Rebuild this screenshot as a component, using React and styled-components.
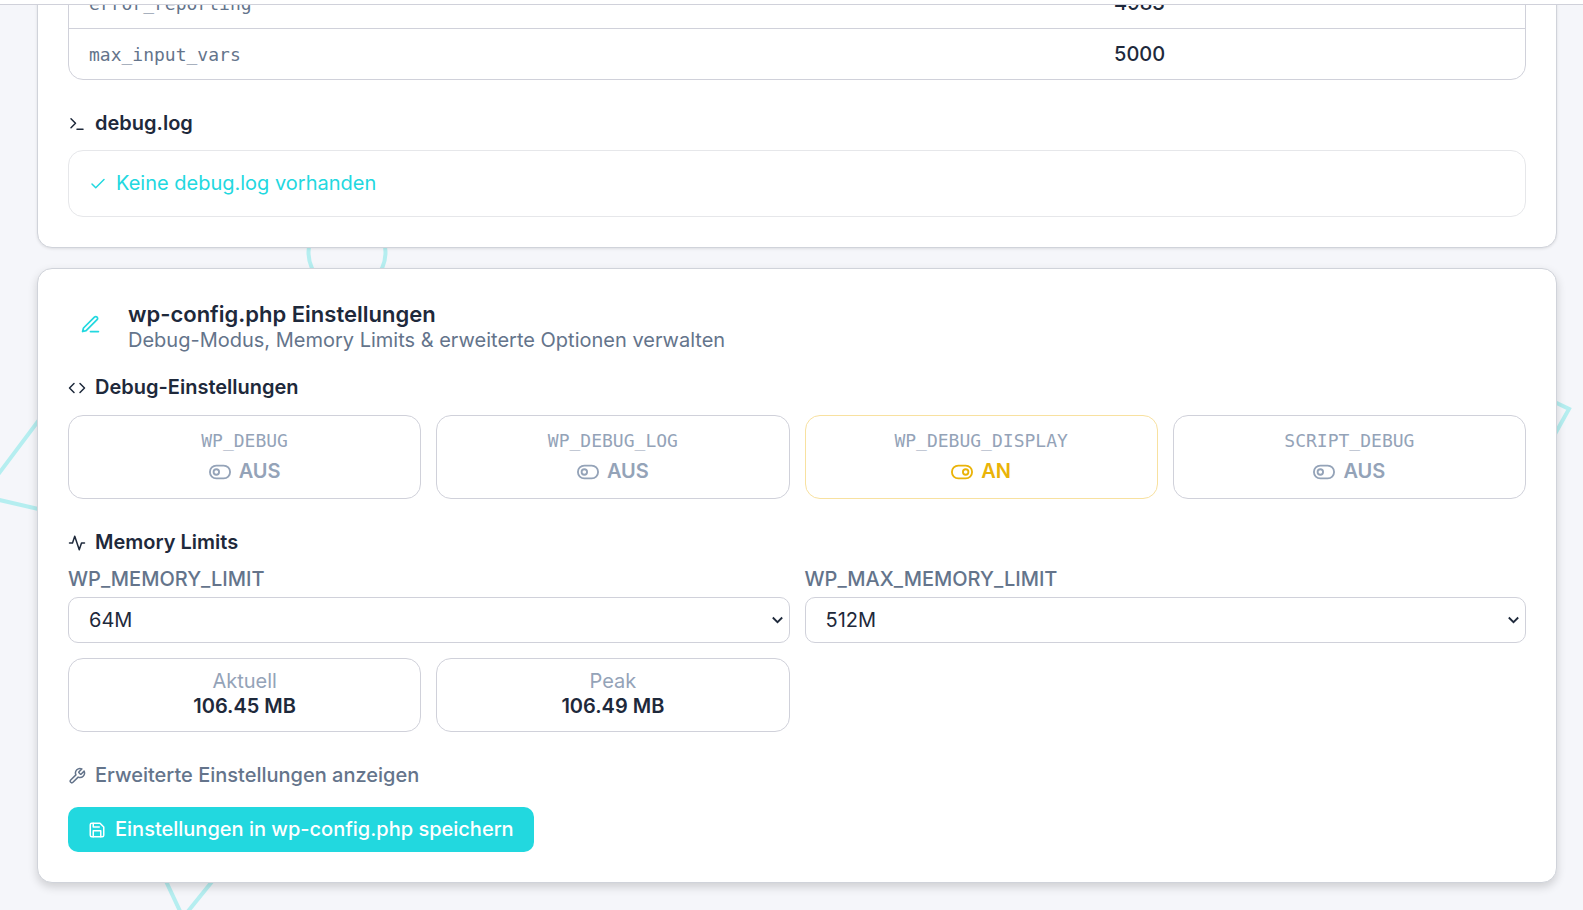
import React, { useState } from 'react';
import styled, { createGlobalStyle } from 'styled-components';
import {
  FiActivity,
  FiCheck,
  FiCode,
  FiEdit3,
  FiSave,
  FiTerminal,
  FiToggleLeft,
  FiToggleRight,
  FiTool,
} from 'react-icons/fi';

const colors = {
  text: '#1e293b',
  muted: '#64748b',
  faint: '#94a3b8',
  border: '#d0d1da',
  accent: '#22d8df',
  warning: '#eab308',
};

const GlobalStyle = createGlobalStyle`
  * {
    box-sizing: border-box;
  }
  body {
    margin: 0;
    background: #f5f6fa;
    color: ${colors.text};
    font: 400 20px/25px Inter, sans-serif;
  }
  button, select {
    font: inherit;
    color: inherit;
  }
`;

const Page = styled.div`
  position: relative;
  min-height: 100vh;
  overflow: hidden;
`;

const TopBar = styled.header`
  position: absolute;
  top: 0;
  left: 0;
  right: 0;
  z-index: 2;
  height: 5px;
  background: #fff;
  border-bottom: 1px solid ${colors.border};
`;

const Backdrop = styled.svg`
  position: absolute;
  top: 0;
  left: 0;
  fill: none;
  stroke: #b5eef0;
  stroke-width: 4;
`;

// the page is scrolled down, the first table row sits under the top bar
const Content = styled.main`
  position: relative;
  display: flex;
  flex-direction: column;
  gap: 20px;
  padding: 0 26px 27px 37px;
  margin-top: -55px;
`;

const Card = styled.section`
  padding: 30px;
  background: #fff;
  border: 1px solid #d0d3da;
  border-radius: 15px;
  box-shadow: ${({ $raised }) => ($raised
    ? '0 4px 10px rgba(0, 0, 0, .16)'
    : '0 1px 3px rgba(0, 0, 0, .1)')};
`;

const TableFrame = styled.div`
  border: 1px solid ${colors.border};
  border-radius: 15px;
  overflow: hidden;
`;

const Table = styled.table`
  width: 100%;
  border-collapse: collapse;
  table-layout: fixed;
  th, td {
    height: 51px;
    padding: 2px 20px 0;
    text-align: left;
  }
  tr + tr > * {
    border-top: 1px solid ${colors.border};
  }
  th {
    width: 70.4%;
    color: ${colors.muted};
    font: 400 18px/25px 'DejaVu Sans Mono', monospace;
  }
  td {
    font-weight: 500;
  }
`;

const SectionTitle = styled.h3`
  display: flex;
  align-items: center;
  gap: 9px;
  margin: ${({ $top = 31 }) => $top}px 0 ${({ $bottom = 14 }) => $bottom}px;
  font-size: 20px;
  font-weight: 600;
`;

const LogStatus = styled.div`
  display: flex;
  align-items: center;
  gap: 9px;
  padding: 20px;
  color: ${colors.accent};
  border: 1px solid #e6e7ea;
  border-radius: 15px;
`;

const CardHeader = styled.div`
  display: flex;
  align-items: flex-start;
  gap: 15px;
`;

const HeaderIcon = styled.span`
  display: flex;
  align-items: center;
  justify-content: center;
  width: 45px;
  height: 50px;
  color: ${colors.accent};
`;

const HeaderText = styled.div`
  padding-top: 2px;
`;

const Title = styled.h2`
  margin: 0;
  font-size: 22px;
  line-height: 27px;
  font-weight: 600;
`;

const Subtitle = styled.p`
  margin: 0;
  color: ${colors.muted};
`;

const Grid = styled.div`
  display: grid;
  grid-template-columns: repeat(${({ $columns }) => $columns}, 1fr);
  gap: 15px;
`;

const Toggle = styled.button`
  display: flex;
  flex-direction: column;
  align-items: center;
  gap: 6px;
  padding: 12px 15px 14px;
  background: #fff;
  border: 1px solid ${({ $on }) => ($on ? '#f8e1a0' : colors.border)};
  border-radius: 15px;
  cursor: pointer;
`;

const ToggleName = styled.span`
  color: ${colors.faint};
  font: 400 18px/25px 'DejaVu Sans Mono', monospace;
`;

const ToggleState = styled.span`
  display: flex;
  align-items: center;
  gap: 8px;
  color: ${({ $on }) => ($on ? colors.warning : colors.faint)};
  font-weight: 600;
`;

const Field = styled.label`
  display: flex;
  flex-direction: column;
  gap: 5px;
  color: ${colors.muted};
  font-weight: 500;
`;

const Select = styled.select`
  appearance: none;
  height: 46px;
  padding: 0 20px;
  color: ${colors.text};
  font-weight: 400;
  border: 1px solid ${colors.border};
  border-radius: 10px;
  background: #fff url("data:image/svg+xml,%3Csvg xmlns='http://www.w3.org/2000/svg' width='11' height='8' fill='none' stroke='%231e293b' stroke-width='1.8'%3E%3Cpath d='M.8 1.5l4.7 4.7 4.7-4.7'/%3E%3C/svg%3E") no-repeat right 6px center;
`;

const Stats = styled(Grid)`
  margin-top: 15px;
`;

const Stat = styled.div`
  padding: 10px 10px 12px;
  text-align: center;
  color: ${colors.faint};
  border: 1px solid ${colors.border};
  border-radius: 15px;
  strong {
    display: block;
    color: ${colors.text};
    font-weight: 600;
  }
`;

const Actions = styled.div`
  display: flex;
  flex-direction: column;
  align-items: flex-start;
  gap: 19px;
  margin-top: 31px;
`;

const LinkButton = styled.button`
  display: flex;
  align-items: center;
  gap: 9px;
  padding: 0;
  color: ${colors.muted};
  font-weight: 500;
  background: none;
  border: 0;
  cursor: pointer;
`;

const SaveButton = styled(LinkButton)`
  padding: 10px 20px;
  color: #fff;
  background: ${colors.accent};
  border-radius: 10px;
`;

const phpValues = [
  ['error_reporting', '4983'],
  ['max_input_vars', '5000'],
];

const limits = ['64M', '128M', '256M', '512M'];

export default function App() {
  const [flags, setFlags] = useState({
    WP_DEBUG: false,
    WP_DEBUG_LOG: false,
    WP_DEBUG_DISPLAY: true,
    SCRIPT_DEBUG: false,
  });

  return (
    <Page>
      <GlobalStyle />
      <TopBar />
      <Backdrop width="1583" height="910" aria-hidden="true">
        <circle cx="347" cy="252" r="38.5" />
        <path d="M60 392L-18 496L60 514" />
        <path d="M1540 395L1569 409L1545 452" />
        <path d="M150 847L183 917.5L223 868" />
      </Backdrop>
      <Content>
        <Card>
          <TableFrame>
            <Table>
              <tbody>
                {phpValues.map(([name, value]) => (
                  <tr key={name}>
                    <th scope="row">{name}</th>
                    <td>{value}</td>
                  </tr>
                ))}
              </tbody>
            </Table>
          </TableFrame>
          <SectionTitle>
            <FiTerminal size={18} />
            debug.log
          </SectionTitle>
          <LogStatus>
            <FiCheck size={18} />
            Keine debug.log vorhanden
          </LogStatus>
        </Card>

        <Card $raised>
          <CardHeader>
            <HeaderIcon><FiEdit3 size={21} /></HeaderIcon>
            <HeaderText>
              <Title>wp-config.php Einstellungen</Title>
              <Subtitle>Debug-Modus, Memory Limits &amp; erweiterte Optionen verwalten</Subtitle>
            </HeaderText>
          </CardHeader>

          <SectionTitle $top={22} $bottom={15}>
            <FiCode size={18} />
            Debug-Einstellungen
          </SectionTitle>
          <Grid $columns={4}>
            {Object.entries(flags).map(([name, on]) => (
              <Toggle
                key={name}
                type="button"
                $on={on}
                aria-pressed={on}
                onClick={() => setFlags({ ...flags, [name]: !on })}
              >
                <ToggleName>{name}</ToggleName>
                <ToggleState $on={on}>
                  {on ? <FiToggleRight size={22} /> : <FiToggleLeft size={22} />}
                  {on ? 'AN' : 'AUS'}
                </ToggleState>
              </Toggle>
            ))}
          </Grid>

          <SectionTitle $bottom={12}>
            <FiActivity size={18} />
            Memory Limits
          </SectionTitle>
          <Grid $columns={2}>
            <Field>
              WP_MEMORY_LIMIT
              <Select defaultValue="64M">
                {limits.map((limit) => <option key={limit}>{limit}</option>)}
              </Select>
            </Field>
            <Field>
              WP_MAX_MEMORY_LIMIT
              <Select defaultValue="512M">
                {limits.map((limit) => <option key={limit}>{limit}</option>)}
              </Select>
            </Field>
          </Grid>
          <Stats $columns={4}>
            <Stat>
              Aktuell
              <strong>106.45 MB</strong>
            </Stat>
            <Stat>
              Peak
              <strong>106.49 MB</strong>
            </Stat>
          </Stats>

          <Actions>
            <LinkButton type="button">
              <FiTool size={18} />
              Erweiterte Einstellungen anzeigen
            </LinkButton>
            <SaveButton type="button">
              <FiSave size={18} />
              Einstellungen in wp-config.php speichern
            </SaveButton>
          </Actions>
        </Card>
      </Content>
    </Page>
  );
}
